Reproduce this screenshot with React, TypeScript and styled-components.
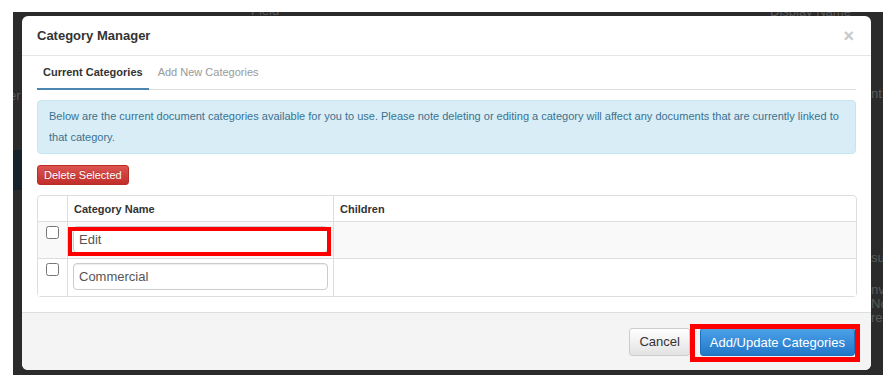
import React from "react";
import styled, { createGlobalStyle } from "styled-components";

const Global = createGlobalStyle`
  html, body { margin: 0; padding: 0; background: #ffffff; }
  body { font-family: "Liberation Sans", Arial, sans-serif; }
  * { box-sizing: border-box; }
`;

const Stage = styled.div`
  width: 896px;
  height: 387px;
  padding: 12px 13px;
  background: #ffffff;
`;

const Backdrop = styled.div`
  position: relative;
  width: 870px;
  height: 363px;
  background: #2b2b2b;
  padding: 4px 12px 5px 9px;
  overflow: hidden;
`;

const Ghost = styled.span<{ $x: number; $y: number }>`
  position: absolute;
  left: ${(p) => p.$x}px;
  top: ${(p) => p.$y}px;
  color: #5a5a5a;
  font-size: 13px;
  white-space: nowrap;
`;

const GhostBand = styled.div`
  position: absolute;
  left: 0;
  top: 138px;
  width: 12px;
  height: 40px;
  background: #17222c;
`;

const Modal = styled.div`
  position: relative;
  width: 849px;
  height: 354px;
  background: #ffffff;
  border-radius: 6px;
  display: flex;
  flex-direction: column;
  overflow: hidden;
`;

const Header = styled.div`
  height: 40px;
  padding: 0 15px;
  display: flex;
  align-items: center;
  justify-content: space-between;
  border-bottom: 1px solid #e5e5e5;
`;

const Title = styled.h4`
  margin: 0;
  font-size: 13px;
  font-weight: bold;
  color: #333333;
`;

const Close = styled.span`
  font-size: 18px;
  font-weight: bold;
  color: #c8c8c8;
  line-height: 1;
  margin-right: 2px;
`;

const Body = styled.div`
  padding: 0 15px 15px;
  flex: 1;
`;

const Tabs = styled.div`
  display: flex;
  height: 34px;
  border-bottom: 1px solid #dddddd;
`;

const Tab = styled.div<{ $active?: boolean }>`
  display: flex;
  align-items: center;
  padding: 0 6px;
  margin-right: 3px;
  margin-bottom: -1px;
  font-size: 11px;
  font-weight: ${(p) => (p.$active ? "bold" : "normal")};
  color: ${(p) => (p.$active ? "#333333" : "#999999")};
  border-bottom: 2px solid ${(p) => (p.$active ? "#4a86b0" : "transparent")};
`;

const Alert = styled.div`
  margin-top: 10px;
  padding: 5px 11px;
  background: #d9edf7;
  border: 1px solid #c4e6f1;
  border-radius: 4px;
  color: #3a7290;
  font-size: 11px;
  line-height: 21px;
`;

const DangerButton = styled.button`
  margin-top: 11px;
  height: 20px;
  padding: 0 6px;
  border: 1px solid #b92c28;
  border-radius: 3px;
  background: linear-gradient(#dc5450, #c12e2a);
  color: #ffffff;
  font-family: "Liberation Sans", Arial, sans-serif;
  font-size: 11px;
  text-shadow: 0 -1px 0 rgba(0, 0, 0, 0.2);
  display: block;
`;

const Table = styled.table`
  margin-top: 10px;
  width: 820px;
  border-collapse: separate;
  border-spacing: 0;
  border: 1px solid #dddddd;
  border-radius: 4px;
  table-layout: fixed;
`;

const Th = styled.th<{ $w?: number }>`
  width: ${(p) => (p.$w ? `${p.$w}px` : "auto")};
  height: 26px;
  padding: 0 6px;
  text-align: left;
  font-size: 11px;
  font-weight: bold;
  color: #333333;
  border-left: 1px solid #dddddd;
  border-bottom: 1px solid #dddddd;
  &:first-child { border-left: none; }
`;

const Tr = styled.tr<{ $striped?: boolean }>`
  background: ${(p) => (p.$striped ? "#f9f9f9" : "#ffffff")};
  &:last-child td { border-bottom: none; }
`;

const Td = styled.td`
  position: relative;
  height: 37px;
  padding: 4px 5px 5px;
  vertical-align: top;
  border-left: 1px solid #dddddd;
  border-bottom: 1px solid #dddddd;
  &:first-child { border-left: none; padding-left: 8px; padding-top: 3px; }
`;

const Check = styled.input`
  margin: 1px 0 0;
  width: 13px;
  height: 13px;
  display: block;
`;

const TextInput = styled.input`
  display: block;
  width: 255px;
  height: 27px;
  padding: 0 5px;
  border: 1px solid #cccccc;
  border-radius: 4px;
  background: #ffffff;
  font-family: "Liberation Sans", Arial, sans-serif;
  font-size: 13px;
  color: #555555;
  box-shadow: inset 0 1px 1px rgba(0, 0, 0, 0.075);
`;

const Highlight = styled.div<{ $t: number; $r: number; $b: number; $l: number; $w: number }>`
  position: absolute;
  top: ${(p) => p.$t}px;
  right: ${(p) => p.$r}px;
  bottom: ${(p) => p.$b}px;
  left: ${(p) => p.$l}px;
  border: ${(p) => p.$w}px solid #ff0000;
  pointer-events: none;
`;

const Footer = styled.div`
  height: 58px;
  padding: 0 16px;
  display: flex;
  align-items: center;
  justify-content: flex-end;
  gap: 10px;
  background: #f4f4f4;
  border-top: 1px solid #dedede;
`;

const Button = styled.button<{ $primary?: boolean }>`
  height: 28px;
  padding: 0 9px;
  border-radius: 3px;
  font-family: "Liberation Sans", Arial, sans-serif;
  font-size: 13px;
  border: 1px solid ${(p) => (p.$primary ? "#1f6fbf" : "#cccccc")};
  color: ${(p) => (p.$primary ? "#ffffff" : "#333333")};
  background: ${(p) =>
    p.$primary ? "linear-gradient(#4aa2e8, #2377c8)" : "linear-gradient(#ffffff, #e2e2e2)"};
  display: block;
`;

const Wrap = styled.div`
  position: relative;
  margin-top: 1px;
`;

export default function App() {
  return (
    <>
      <Global />
      <Stage>
        <Backdrop>
          <Ghost $x={238} $y={-9}>Field</Ghost>
          <Ghost $x={757} $y={-8}>Display Name</Ghost>
          <Ghost $x={-4} $y={76}>er</Ghost>
          <GhostBand />
          <Ghost $x={858} $y={74}>nt</Ghost>
          <Ghost $x={858} $y={238}>su</Ghost>
          <Ghost $x={858} $y={270}>nv</Ghost>
          <Ghost $x={858} $y={284}>No</Ghost>
          <Ghost $x={858} $y={298}>re</Ghost>
          <Modal>
            <Header>
              <Title>Category Manager</Title>
              <Close>×</Close>
            </Header>
            <Body>
              <Tabs>
                <Tab $active>Current Categories</Tab>
                <Tab>Add New Categories</Tab>
              </Tabs>
              <Alert>
                Below are the current document categories available for you to use. Please note
                deleting or editing a category will affect any documents that are currently linked to
                that category.
              </Alert>
              <DangerButton>Delete Selected</DangerButton>
              <Table>
                <thead>
                  <tr>
                    <Th $w={29}></Th>
                    <Th $w={266}>Category Name</Th>
                    <Th>Children</Th>
                  </tr>
                </thead>
                <tbody>
                  <Tr $striped>
                    <Td>
                      <Check type="checkbox" />
                    </Td>
                    <Td>
                      <TextInput defaultValue="Edit" />
                      <Highlight $t={5} $r={2} $b={2} $l={0} $w={4} />
                    </Td>
                    <Td></Td>
                  </Tr>
                  <Tr>
                    <Td>
                      <Check type="checkbox" />
                    </Td>
                    <Td>
                      <TextInput defaultValue="Commercial" />
                    </Td>
                    <Td></Td>
                  </Tr>
                </tbody>
              </Table>
            </Body>
            <Footer>
              <Button>Cancel</Button>
              <Wrap>
                <Button $primary>Add/Update Categories</Button>
                <Highlight $t={-4} $r={-5} $b={-6} $l={-10} $w={5} />
              </Wrap>
            </Footer>
          </Modal>
        </Backdrop>
      </Stage>
    </>
  );
}
